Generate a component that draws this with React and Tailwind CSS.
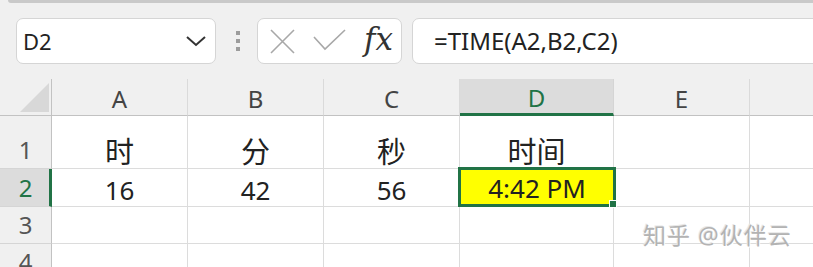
const cols = [
  { key: 'A', w: 'w-[136px]' },
  { key: 'B', w: 'w-[136px]' },
  { key: 'C', w: 'w-[136px]' },
  { key: 'D', w: 'w-[154px]' },
  { key: 'E', w: 'w-[136px]' },
  { key: 'F', w: 'w-[80px]' },
];

const rows = [
  { n: '1', h: 'h-[53px]', cells: ['时', '分', '秒', '时间', '', ''], cjk: true },
  { n: '2', h: 'h-[38px]', cells: ['16', '42', '56', '4:42 PM', '', ''] },
  { n: '3', h: 'h-[37px]', cells: ['', '', '', '', '', ''] },
  { n: '4', h: 'h-[37px]', cells: ['', '', '', '', '', ''] },
];

const App = () => {
  return (
    <div className="relative w-[813px] h-[267px] overflow-hidden bg-[#f0f0f0] font-['Noto_Sans','Noto_Sans_CJK_SC',sans-serif] text-[#222]">
      <div className="ml-[8px] h-[3px] bg-[#c9c9c9] rounded-bl-[6px]" />

      {/* formula bar */}
      <div className="mt-[15px] flex h-[46px] pl-[16px]">
        <div className="flex w-[200px] shrink-0 items-center justify-between rounded-[7px] border border-[#d5d5d5] bg-white pl-[6px] pr-[9px]">
          <span className="text-[22px] leading-none">D2</span>
          <svg width="20" height="12" viewBox="0 0 20 12">
            <path d="M1 2 L10 10 L19 2" fill="none" stroke="#333" strokeWidth="2" />
          </svg>
        </div>
        <div className="flex w-[41px] shrink-0 flex-col items-center justify-center gap-[4px] pl-[2px]">
          <div className="h-[4px] w-[4px] bg-[#9c9c9c]" />
          <div className="h-[4px] w-[4px] bg-[#9c9c9c]" />
          <div className="h-[4px] w-[4px] bg-[#9c9c9c]" />
        </div>
        <div className="flex w-[145px] shrink-0 items-center rounded-[7px] border border-[#d5d5d5] bg-white pl-[12px]">
          <svg width="25" height="25" viewBox="0 0 25 25">
            <path d="M1 1 L24 24 M24 1 L1 24" stroke="#a8a8a8" strokeWidth="1.6" fill="none" />
          </svg>
          <svg width="34" height="24" viewBox="0 0 34 24" className="ml-[18px]">
            <path d="M1 8 L12 20 L32 1" stroke="#a8a8a8" strokeWidth="1.6" fill="none" />
          </svg>
          <span className="ml-[17px] -mt-[4px] font-['DejaVu_Serif','Liberation_Serif',serif] text-[31px] italic leading-none text-[#333]">fx</span>
        </div>
        <div className="ml-[10px] flex w-[420px] shrink-0 items-center rounded-l-[7px] border border-[#d5d5d5] bg-white pl-[21px]">
          <span className="text-[24px] leading-none">=TIME(A2,B2,C2)</span>
        </div>
      </div>

      {/* sheet */}
      <div className="mt-[15px]">
        <div className="flex h-[37px]">
          <div className="relative w-[52px] shrink-0 border-r border-b border-[#c2c2c2]">
            <svg width="30" height="30" viewBox="0 0 30 30" className="absolute left-[20px] top-[4px]">
              <polygon points="29,0 29,29 0,29" fill="#d8d8d8" />
            </svg>
          </div>
          {cols.map((c) =>
            c.key === 'D' ? (
              <div key={c.key} className={`${c.w} flex shrink-0 items-center justify-center border-r border-b-[3px] border-r-[#d5d5d5] border-b-[#217346] bg-[#dcdcdc] pt-[4px] text-[24px] text-[#217346]`}>
                {c.key}
              </div>
            ) : (
              <div key={c.key} className={`${c.w} flex shrink-0 items-center justify-center border-r border-b border-r-[#dadada] border-b-[#c2c2c2] pt-[3px] text-[24px] text-[#444]`}>
                {c.key === 'F' ? '' : c.key}
              </div>
            )
          )}
        </div>

        {rows.map((r) => (
          <div key={r.n} className={`flex ${r.h}`}>
            {r.n === '2' ? (
              <div className="flex w-[52px] shrink-0 items-end justify-center border-r-[3px] border-b border-r-[#217346] border-b-[#d5d5d5] bg-[#dcdcdc] pb-[1px] pl-[2px] text-[24px] leading-[34px] text-[#217346]">
                {r.n}
              </div>
            ) : (
              <div className="flex w-[52px] shrink-0 items-end justify-center border-r border-b border-r-[#c2c2c2] border-b-[#d5d5d5] pb-[1px] text-[24px] leading-[34px] text-[#555]">
                {r.n}
              </div>
            )}
            {cols.map((c, i) => {
              const sel = r.n === '2' && c.key === 'D';
              return (
                <div key={c.key} className={`${c.w} relative flex shrink-0 items-end justify-center border-r border-b border-[#dcdcdc] bg-white`}>
                  {sel ? (
                    <div className="absolute -left-[2px] -top-[2px] -right-[3px] -bottom-[1px] z-10 flex items-end justify-center border-[3px] border-[#217346] bg-[#ffff00] text-[26px] leading-[31px] text-[#222]">
                      {r.cells[i]}
                      <div className="absolute -right-[4px] -bottom-[4px] h-[8px] w-[8px] border border-white bg-[#217346]" />
                    </div>
                  ) : r.cjk ? (
                    <span className="text-[29px] leading-[33px]">{r.cells[i]}</span>
                  ) : (
                    <span className="text-[26px] leading-[32px]">{r.cells[i]}</span>
                  )}
                </div>
              );
            })}
          </div>
        ))}
      </div>

      <div className="absolute left-[643px] top-[218px] text-[23px] tracking-[1px] text-[#b3b3b3] [text-shadow:1px_1px_0_#ffffff,-1px_-1px_0_#e8e8e8]">
        知乎 @伙伴云
      </div>
    </div>
  );
};

export default App;
